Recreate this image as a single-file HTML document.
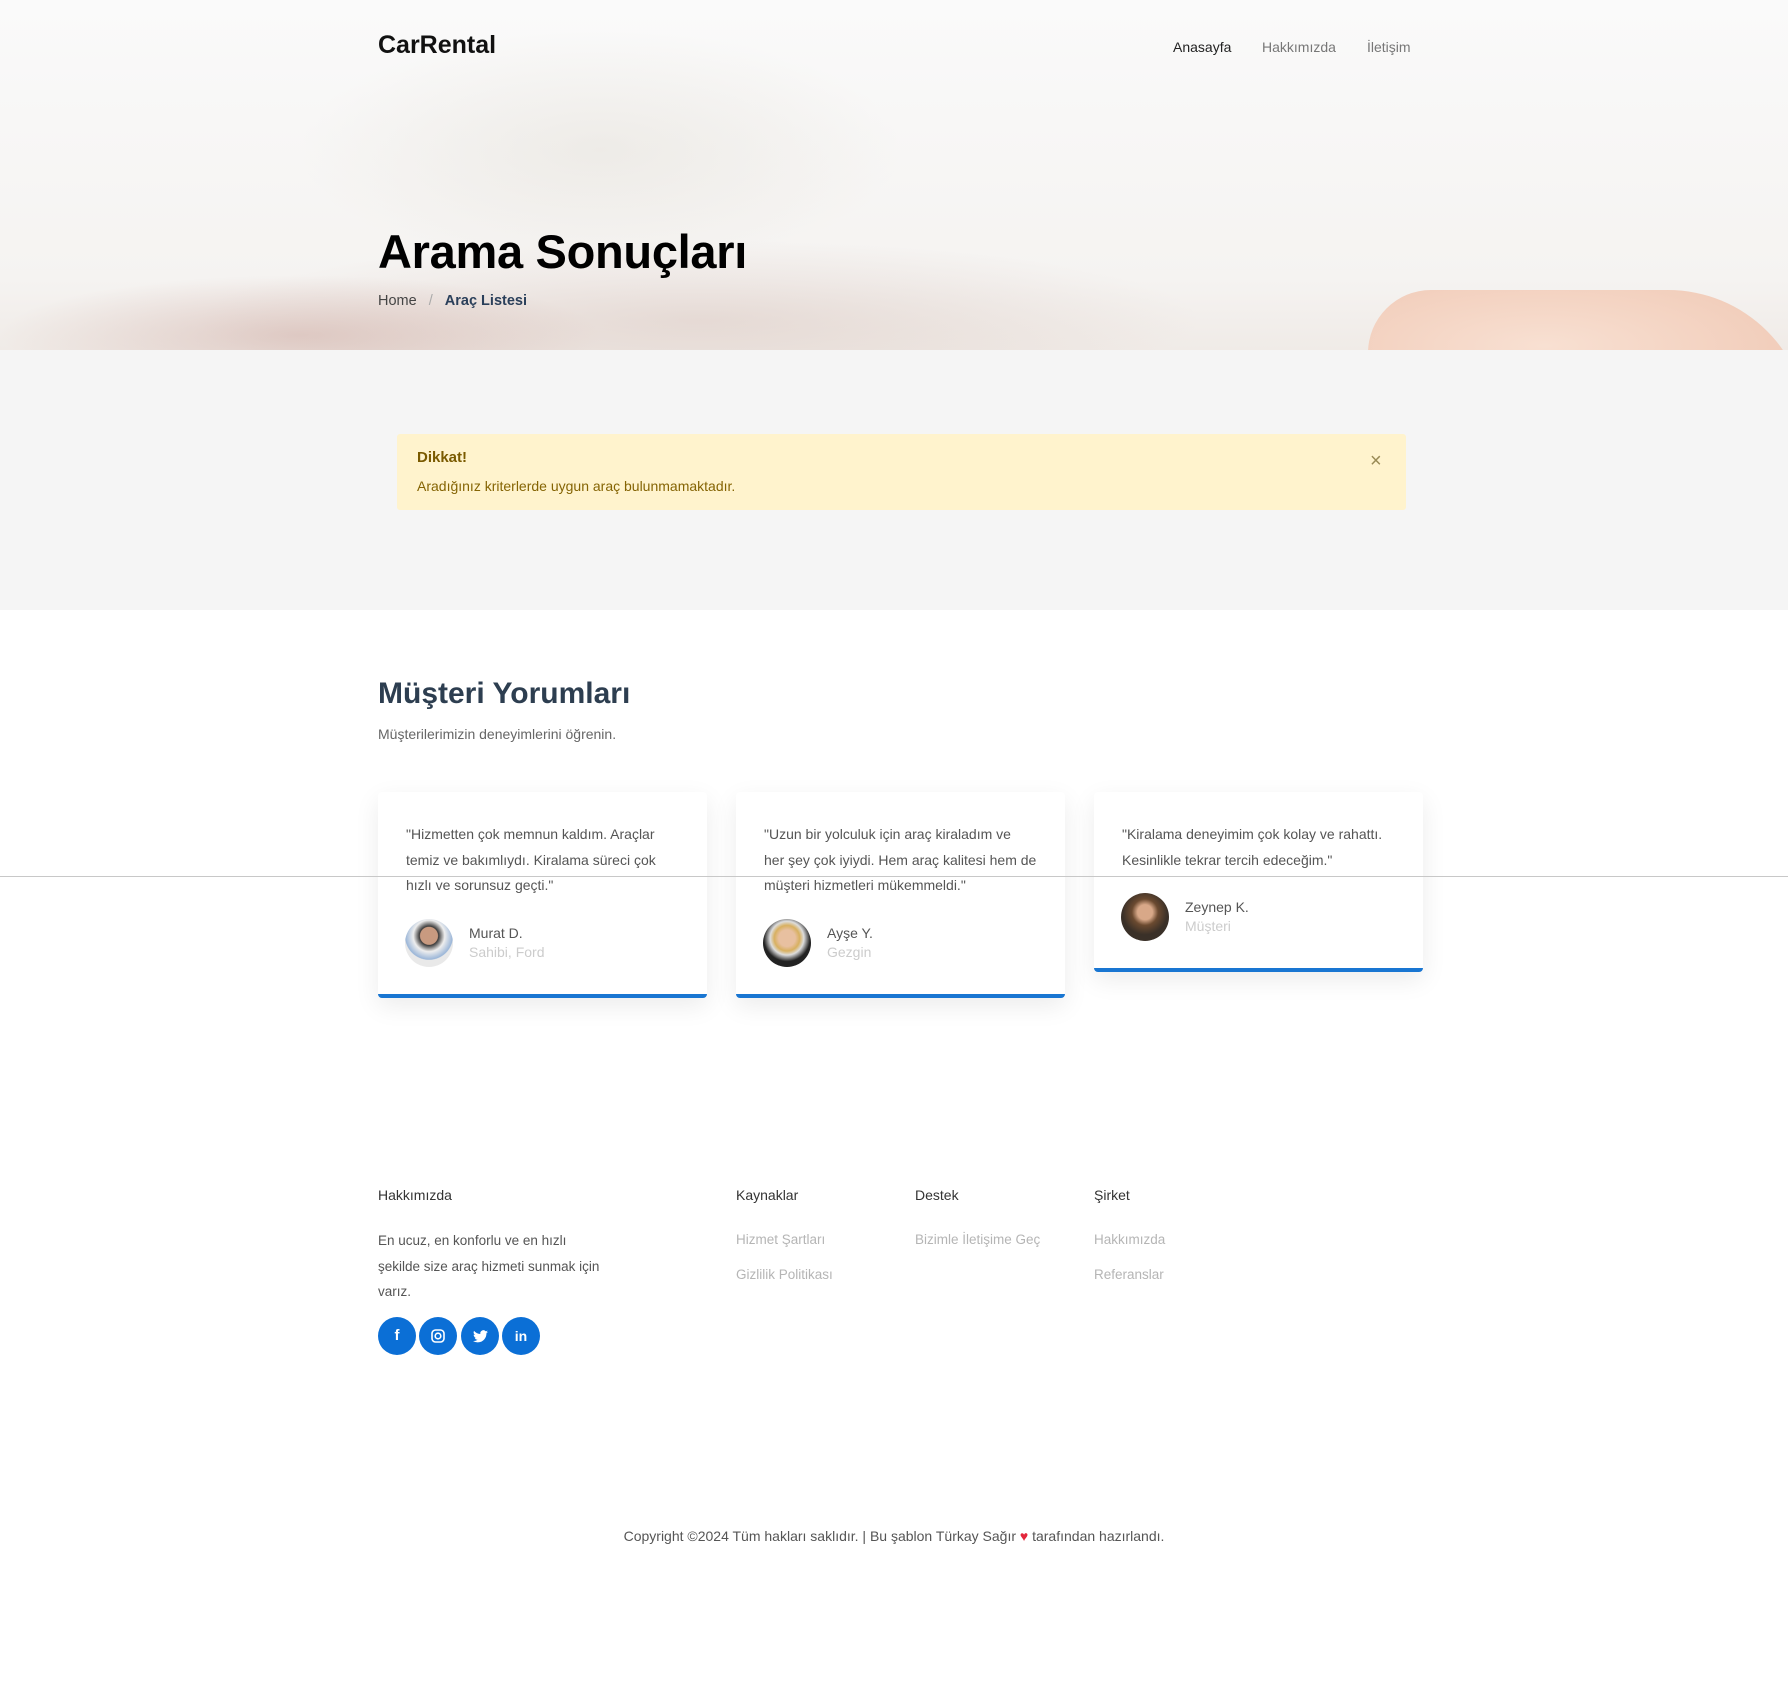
<!DOCTYPE html>
<html><head><meta charset="utf-8"><style>
*{margin:0;padding:0;box-sizing:border-box}
body{width:1788px;height:1685px;background:#fff;font-family:"Liberation Sans",sans-serif;position:relative;overflow:hidden;color:#333}
.a{position:absolute;white-space:nowrap}
.hero{position:absolute;left:0;top:0;width:1788px;height:350px;overflow:hidden;
background:
radial-gradient(ellipse 300px 60px at 300px 335px,rgba(190,140,130,.35),transparent),
radial-gradient(ellipse 500px 80px at 700px 320px,rgba(200,170,160,.3),transparent),
radial-gradient(ellipse 300px 120px at 600px 150px,rgba(220,215,205,.35),transparent),
linear-gradient(#fafafa,#f5f3f1 80%,#f0ebe7);}
.hand{position:absolute;left:1368px;top:290px;width:440px;height:140px;border-radius:90px 200px 0 0;background:radial-gradient(ellipse at 40% 40%,#f8e0d2,#eec3ae);}
.grey{position:absolute;left:0;top:350px;width:1788px;height:260px;background:#f5f5f5}
.card{position:absolute;background:#fff;border-radius:4px;box-shadow:0 8px 25px rgba(0,0,0,.08);border-bottom:4px solid #1976d2}
.q{position:absolute;left:28px;top:30px;font-size:14px;line-height:25.5px;color:#555;white-space:nowrap}
.av{position:absolute;width:48px;height:48px;border-radius:50%}
.nm{font-size:14px;color:#555}.rl{font-size:14px;color:#ccc}
.fh{font-size:14px;color:#333}
.fl{font-size:13.5px;color:#b5b5b5}
.soc{position:absolute;top:1317px;width:38px;height:38px;border-radius:50%;background:#0b6fd6;color:#fff;font-weight:bold;font-size:15px;text-align:center;line-height:38px}
</style></head><body>
<div class="hero"><div class="hand"></div></div>
<div class="a" style="left:378px;top:31px;font-size:25px;font-weight:bold;color:#111">CarRental</div>
<div class="a" style="left:1173px;top:39px;font-size:14px;color:#222">Anasayfa</div>
<div class="a" style="left:1262px;top:39px;font-size:14px;color:#777">Hakkımızda</div>
<div class="a" style="left:1367px;top:39px;font-size:14px;color:#777">İletişim</div>
<div class="a" style="left:378px;top:224px;font-size:47px;font-weight:bold;color:#000;letter-spacing:-.3px">Arama Sonuçları</div>
<div class="a" style="left:378px;top:293px;font-size:14.5px;color:#444">Home <span style="color:#aaa;margin:0 8px">/</span> <b style="color:#2a3f5a">Araç Listesi</b></div>
<div class="grey"></div>
<div class="a" style="left:397px;top:434px;width:1009px;height:76px;background:#fff3cd;border-radius:3px"></div>
<div class="a" style="left:417px;top:449px;font-size:15px;font-weight:bold;color:#7a5a00">Dikkat!</div>
<div class="a" style="left:417px;top:478px;font-size:14px;color:#856404">Aradığınız kriterlerde uygun araç bulunmamaktadır.</div>
<div class="a" style="left:1370px;top:450px;font-size:20px;color:#998a55">×</div>
<div class="a" style="left:378px;top:677px;font-size:30px;font-weight:bold;color:#2d3e50">Müşteri Yorumları</div>
<div class="a" style="left:378px;top:726px;font-size:14px;color:#666">Müşterilerimizin deneyimlerini öğrenin.</div>
<div class="card" style="left:378px;top:792px;width:329px;height:206px">
<div class="q">"Hizmetten çok memnun kaldım. Araçlar<br>temiz ve bakımlıydı. Kiralama süreci çok<br>hızlı ve sorunsuz geçti."</div>
<div class="av" style="left:27px;top:127px;background:radial-gradient(circle at 50% 35%,#c89a80 22%,#3b3b3b 24%,#eee 40%,#9bb6d8 60%,#e9e9e9 62%)"></div>
<div class="a nm" style="left:91px;top:133px">Murat D.</div><div class="a rl" style="left:91px;top:152px">Sahibi, Ford</div></div>
<div class="card" style="left:736px;top:792px;width:329px;height:206px">
<div class="q">"Uzun bir yolculuk için araç kiraladım ve<br>her şey çok iyiydi. Hem araç kalitesi hem de<br>müşteri hizmetleri mükemmeldi."</div>
<div class="av" style="left:27px;top:127px;background:radial-gradient(circle at 50% 40%,#e8c0a0 22%,#d8b060 34%,#ddd 45%,#222 62%)"></div>
<div class="a nm" style="left:91px;top:133px">Ayşe Y.</div><div class="a rl" style="left:91px;top:152px">Gezgin</div></div>
<div class="card" style="left:1094px;top:792px;width:329px;height:180px">
<div class="q">"Kiralama deneyimim çok kolay ve rahattı.<br>Kesinlikle tekrar tercih edeceğim."</div>
<div class="av" style="left:27px;top:101px;background:radial-gradient(circle at 50% 40%,#d8a888 20%,#6b4a30 35%,#3a3028 60%)"></div>
<div class="a nm" style="left:91px;top:107px">Zeynep K.</div><div class="a rl" style="left:91px;top:126px">Müşteri</div></div>
<div class="a" style="left:0;top:876px;width:1788px;height:1px;background:#c8c8c8"></div>
<div class="a fh" style="left:378px;top:1187px">Hakkımızda</div>
<div class="a fh" style="left:736px;top:1187px">Kaynaklar</div>
<div class="a fh" style="left:915px;top:1187px">Destek</div>
<div class="a fh" style="left:1094px;top:1187px">Şirket</div>
<div class="a" style="left:378px;top:1228px;font-size:13.5px;line-height:25.5px;color:#555">En ucuz, en konforlu ve en hızlı<br>şekilde size araç hizmeti sunmak için<br>varız.</div>
<div class="a fl" style="left:736px;top:1232px">Hizmet Şartları</div>
<div class="a fl" style="left:736px;top:1267px">Gizlilik Politikası</div>
<div class="a fl" style="left:915px;top:1232px">Bizimle İletişime Geç</div>
<div class="a fl" style="left:1094px;top:1232px">Hakkımızda</div>
<div class="a fl" style="left:1094px;top:1267px">Referanslar</div>
<div class="soc" style="left:378px">f</div>
<div class="soc" style="left:419px"><svg width="14" height="14" viewBox="0 0 14 14" style="margin-top:12px"><rect x="1" y="1" width="12" height="12" rx="3.5" fill="none" stroke="#fff" stroke-width="1.6"/><circle cx="7" cy="7" r="2.8" fill="none" stroke="#fff" stroke-width="1.6"/></svg></div>
<div class="soc" style="left:461px"><svg width="15" height="13" viewBox="0 0 24 20" style="margin-top:13px"><path fill="#fff" d="M24 2.4a10 10 0 0 1-2.8.8A5 5 0 0 0 23.3.4a10 10 0 0 1-3.1 1.2A4.9 4.9 0 0 0 11.8 6 14 14 0 0 1 1.7.9a4.9 4.9 0 0 0 1.5 6.6A4.9 4.9 0 0 1 1 6.9a4.9 4.9 0 0 0 3.9 4.8 5 5 0 0 1-2.2.1 4.9 4.9 0 0 0 4.6 3.4A9.900 9.9 0 0 1 0 17.2 14 14 0 0 0 7.5 19.4c9.1 0 14-7.5 14-14v-.6A10 10 0 0 0 24 2.4z"/></svg></div>
<div class="soc" style="left:502px;font-size:14px">in</div>
<div class="a" style="left:0;width:1788px;text-align:center;top:1528px;font-size:14px;color:#555">Copyright ©2024 Tüm hakları saklıdır. | Bu şablon Türkay Sağır <span style="color:#e3263b">♥</span> tarafından hazırlandı.</div>
</body></html>
